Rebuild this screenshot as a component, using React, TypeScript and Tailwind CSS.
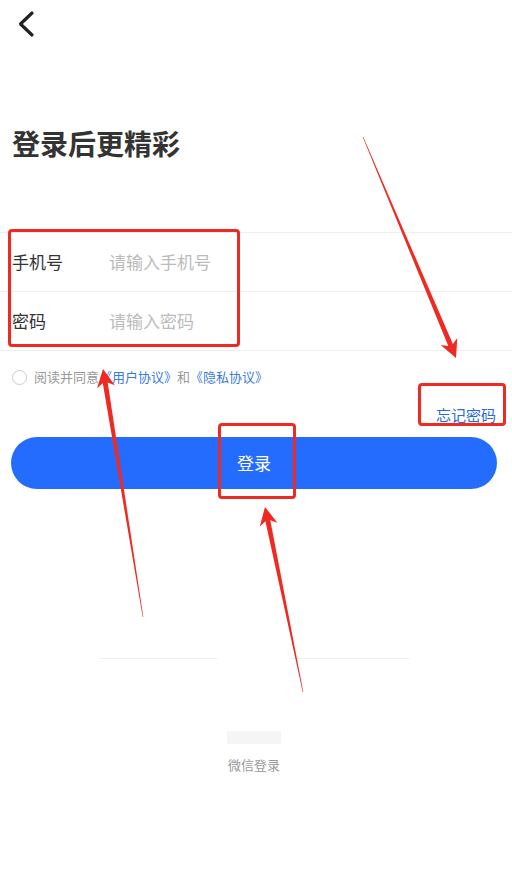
import React from "react";

type Pt = [number, number];

// tapered annotation arrow: thin tail, thicker shaft, triangular head
function arrowPoints(tail: Pt, tip: Pt, headLen = 18, headW = 18, shaftW = 5, tailW = 0.6) {
  const dx = tip[0] - tail[0];
  const dy = tip[1] - tail[1];
  const len = Math.hypot(dx, dy);
  const ux = dx / len;
  const uy = dy / len;
  const nx = -uy;
  const ny = ux;
  const bx = tip[0] - ux * headLen;
  const by = tip[1] - uy * headLen;
  const jx = tip[0] - ux * (headLen - 4);
  const jy = tip[1] - uy * (headLen - 4);
  const pts: Pt[] = [
    [tail[0] + (nx * tailW) / 2, tail[1] + (ny * tailW) / 2],
    [jx + (nx * shaftW) / 2, jy + (ny * shaftW) / 2],
    [bx + (nx * headW) / 2, by + (ny * headW) / 2],
    tip,
    [bx - (nx * headW) / 2, by - (ny * headW) / 2],
    [jx - (nx * shaftW) / 2, jy - (ny * shaftW) / 2],
    [tail[0] - (nx * tailW) / 2, tail[1] - (ny * tailW) / 2],
  ];
  return pts.map((p) => `${p[0].toFixed(1)},${p[1].toFixed(1)}`).join(" ");
}

const arrows: { tail: Pt; tip: Pt }[] = [
  { tail: [363, 137], tip: [456, 358] },
  { tail: [143, 617], tip: [103, 369] },
  { tail: [303, 692], tip: [265, 507] },
];

function FormRow({ label, placeholder }: { label: string; placeholder: string }) {
  return (
    <div className="flex h-[59px] items-center border-b border-[#eeeeee] pl-[12px]">
      <span className="w-[97px] text-[17px] leading-[24px] text-[#333333]">{label}</span>
      <span className="text-[17px] leading-[24px] text-[#bbbbbb]">{placeholder}</span>
    </div>
  );
}

export default function App() {
  return (
    <div className="relative h-[895px] w-[512px] overflow-hidden bg-white font-['Noto_Sans_CJK_SC','Liberation_Sans',sans-serif]">
      <div className="h-[48px] pl-[14px] pt-[10px]">
        <svg width="24" height="28" viewBox="0 0 24 28">
          <path d="M18 3 L6.5 14 L18 25" fill="none" stroke="#222222" strokeWidth="3.2" strokeLinecap="round" strokeLinejoin="round" />
        </svg>
      </div>

      <h1 className="mt-[75px] pl-[12px] text-[28px] font-bold leading-[40px] text-[#333333]">登录后更精彩</h1>

      <div className="mt-[69px] border-t border-[#eeeeee]">
        <FormRow label="手机号" placeholder="请输入手机号" />
        <FormRow label="密码" placeholder="请输入密码" />
      </div>

      <div className="mt-[16px] flex h-[20px] items-center pl-[12px] text-[13px] leading-[20px] text-[#999999]">
        <span className="mr-[7px] h-[15px] w-[15px] rounded-full border border-[#cccccc]" />
        <span>阅读并同意</span>
        <span className="text-[#3b7bd8]">《用户协议》</span>
        <span>和</span>
        <span className="text-[#3b7bd8]">《隐私协议》</span>
      </div>

      <div className="mt-[18px] flex justify-end pr-[16px] text-[15px] leading-[20px] text-[#2a6ad8]">忘记密码</div>

      <button className="ml-[11px] mt-[12px] flex h-[52px] w-[486px] items-center justify-center rounded-full bg-[#246cfe] text-[17px] text-white">
        登录
      </button>

      <div className="ml-[99px] mt-[169px] flex items-center">
        <div className="h-px w-[118px] bg-[#eeeeee]" />
        <div className="w-[74px]" />
        <div className="h-px w-[118px] bg-[#eeeeee]" />
      </div>

      <div className="ml-[227px] mt-[72px] h-[13px] w-[54px] bg-[#f5f5f5]" />
      <div className="ml-[228px] mt-[12px] text-[13px] leading-[18px] text-[#999999]">微信登录</div>

      {/* annotation overlay */}
      <div className="pointer-events-none absolute left-[8px] top-[229px] h-[118px] w-[232px] rounded-[4px] border-[3px] border-[#ee2a22]" />
      <div className="pointer-events-none absolute left-[418px] top-[383px] h-[43px] w-[88px] rounded-[4px] border-[3px] border-[#ee2a22]" />
      <div className="pointer-events-none absolute left-[218px] top-[423px] h-[76px] w-[78px] rounded-[4px] border-[3px] border-[#ee2a22]" />
      <svg className="pointer-events-none absolute left-0 top-0" width="512" height="895" viewBox="0 0 512 895">
        {arrows.map((a, i) => (
          <polygon key={i} points={arrowPoints(a.tail, a.tip)} fill="#ee2a22" />
        ))}
      </svg>
    </div>
  );
}
